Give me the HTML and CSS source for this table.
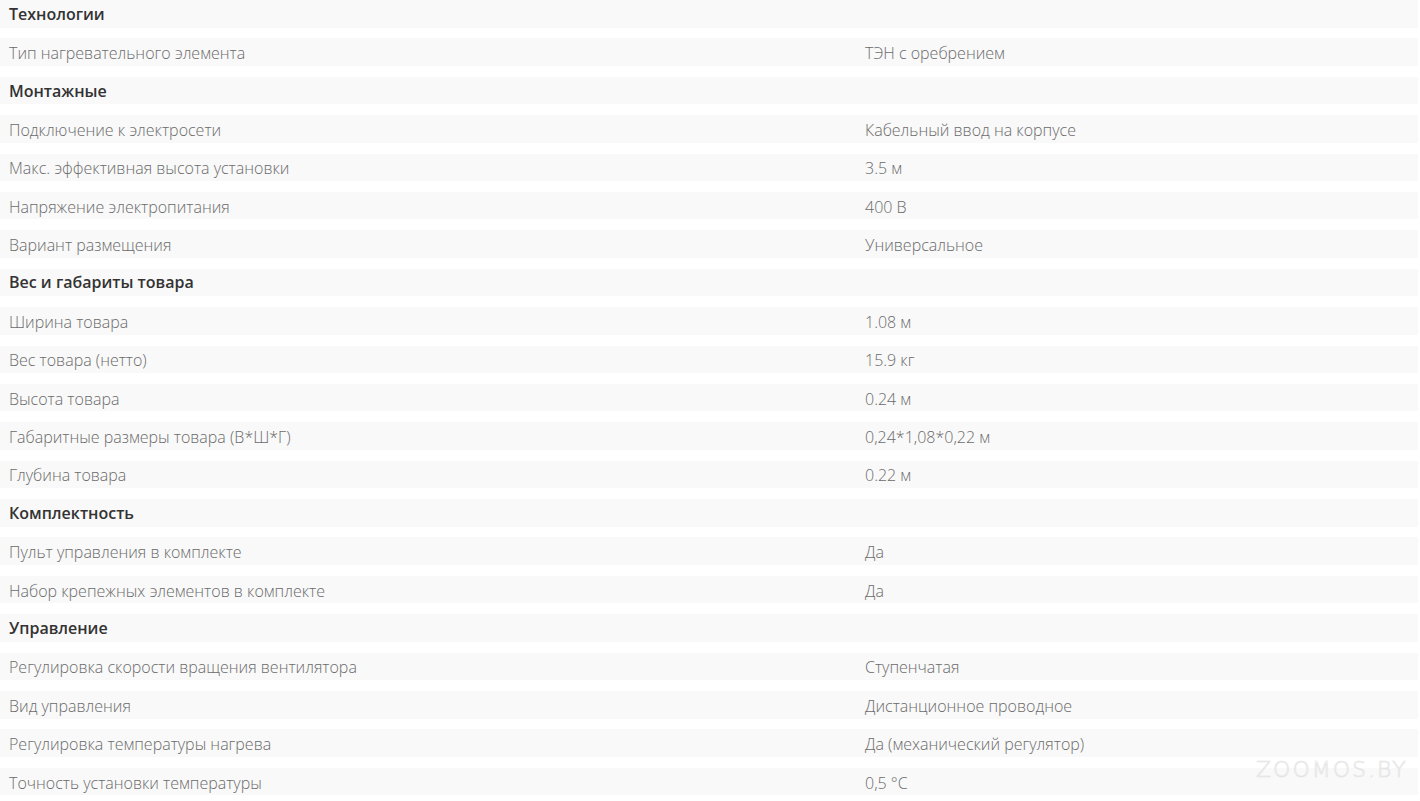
FILE: index.html
```html
<!DOCTYPE html>
<html lang="ru">
<head>
<meta charset="utf-8">
<title>Характеристики</title>
<link rel="stylesheet" href="styles.css">
</head>
<body>
<div class="specs">
  <div class="row head"><div class="cell">Технологии</div><div class="cell"></div></div>
  <div class="row"><div class="cell">Тип нагревательного элемента</div><div class="cell">ТЭН с оребрением</div></div>
  <div class="row head"><div class="cell">Монтажные</div><div class="cell"></div></div>
  <div class="row"><div class="cell">Подключение к электросети</div><div class="cell">Кабельный ввод на корпусе</div></div>
  <div class="row"><div class="cell">Макс. эффективная высота установки</div><div class="cell">3.5 м</div></div>
  <div class="row"><div class="cell">Напряжение электропитания</div><div class="cell">400 В</div></div>
  <div class="row"><div class="cell">Вариант размещения</div><div class="cell">Универсальное</div></div>
  <div class="row head"><div class="cell">Вес и габариты товара</div><div class="cell"></div></div>
  <div class="row"><div class="cell">Ширина товара</div><div class="cell">1.08 м</div></div>
  <div class="row"><div class="cell">Вес товара (нетто)</div><div class="cell">15.9 кг</div></div>
  <div class="row"><div class="cell">Высота товара</div><div class="cell">0.24 м</div></div>
  <div class="row"><div class="cell">Габаритные размеры товара (В*Ш*Г)</div><div class="cell">0,24*1,08*0,22 м</div></div>
  <div class="row"><div class="cell">Глубина товара</div><div class="cell">0.22 м</div></div>
  <div class="row head"><div class="cell">Комплектность</div><div class="cell"></div></div>
  <div class="row"><div class="cell">Пульт управления в комплекте</div><div class="cell">Да</div></div>
  <div class="row"><div class="cell">Набор крепежных элементов в комплекте</div><div class="cell">Да</div></div>
  <div class="row head"><div class="cell">Управление</div><div class="cell"></div></div>
  <div class="row"><div class="cell">Регулировка скорости вращения вентилятора</div><div class="cell">Ступенчатая</div></div>
  <div class="row"><div class="cell">Вид управления</div><div class="cell">Дистанционное проводное</div></div>
  <div class="row"><div class="cell">Регулировка температуры нагрева</div><div class="cell">Да (механический регулятор)</div></div>
  <div class="row"><div class="cell">Точность установки температуры</div><div class="cell">0,5 °C</div></div>
</div>
<div class="watermark">zoomos.by</div>
</body>
</html>
```
FILE: styles.css
```css
html, body {
  margin: 0;
  padding: 0;
  background: #ffffff;
}
body {
  font-family: "Open Sans", "Liberation Sans", sans-serif;
  font-size: 16px;
  color: #6b6b6b;
  overflow: hidden;
}
.specs {
  display: flex;
  flex-direction: column;
  gap: 10.9px;
  width: 1418px;
}
.row {
  display: grid;
  grid-template-columns: 856px 1fr;
  height: 27.5px;
  align-items: center;
  background: #f9f9f9;
}
.cell {
  padding-left: 9px;
  padding-top: 2px;
  font-weight: 300;
  line-height: 20px;
  white-space: nowrap;
}
.head .cell {
  padding-top: 0;
  font-weight: 600;
  color: #333333;
}
.watermark {
  position: absolute;
  left: 1256px;
  top: 757px;
  font-family: "DejaVu Sans", sans-serif;
  font-size: 22px;
  font-weight: 300;
  letter-spacing: 2px;
  text-transform: uppercase;
  color: transparent;
  -webkit-text-stroke: 0.7px #e4e4e4;
}
```
